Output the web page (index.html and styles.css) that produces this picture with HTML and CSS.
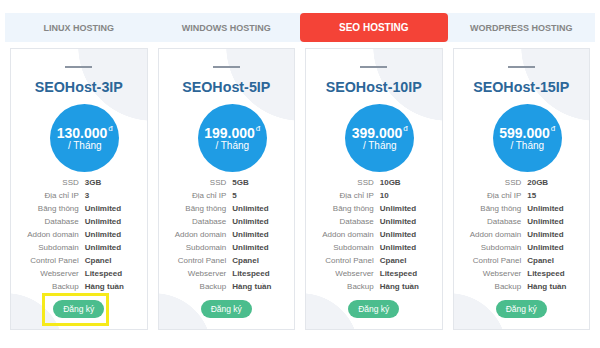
FILE: index.html
```html
<!DOCTYPE html>
<html lang="vi">
<head>
<meta charset="utf-8">
<title>SEO Hosting</title>
<link rel="stylesheet" href="styles.css">
</head>
<body>
<div class="page">
  <nav class="tabs">
    <div class="tab">LINUX HOSTING</div>
    <div class="tab">WINDOWS HOSTING</div>
    <div class="tab active">SEO HOSTING</div>
    <div class="tab">WORDPRESS HOSTING</div>
  </nav>
  <div class="plans">
    <div class="col">
      <div class="card">
        <div class="rule"></div>
        <h2 class="name">SEOHost-3IP</h2>
        <div class="price-wrap"><div class="price"><div class="amount">130.000<sup>đ</sup></div><div class="per">/ Tháng</div></div></div>
        <dl class="specs">
          <dt>SSD</dt><dd>3GB</dd>
          <dt>Địa chỉ IP</dt><dd>3</dd>
          <dt>Băng thông</dt><dd>Unlimited</dd>
          <dt>Database</dt><dd>Unlimited</dd>
          <dt>Addon domain</dt><dd>Unlimited</dd>
          <dt>Subdomain</dt><dd>Unlimited</dd>
          <dt>Control Panel</dt><dd>Cpanel</dd>
          <dt>Webserver</dt><dd>Litespeed</dd>
          <dt>Backup</dt><dd>Hàng tuần</dd>
        </dl>
        <div class="cta"><span class="btn-wrap"><a class="btn">Đăng ký</a><span class="highlight"></span></span></div>
      </div>
    </div>
    <div class="col">
      <div class="card">
        <div class="rule"></div>
        <h2 class="name">SEOHost-5IP</h2>
        <div class="price-wrap"><div class="price"><div class="amount">199.000<sup>đ</sup></div><div class="per">/ Tháng</div></div></div>
        <dl class="specs">
          <dt>SSD</dt><dd>5GB</dd>
          <dt>Địa chỉ IP</dt><dd>5</dd>
          <dt>Băng thông</dt><dd>Unlimited</dd>
          <dt>Database</dt><dd>Unlimited</dd>
          <dt>Addon domain</dt><dd>Unlimited</dd>
          <dt>Subdomain</dt><dd>Unlimited</dd>
          <dt>Control Panel</dt><dd>Cpanel</dd>
          <dt>Webserver</dt><dd>Litespeed</dd>
          <dt>Backup</dt><dd>Hàng tuần</dd>
        </dl>
        <div class="cta"><span class="btn-wrap"><a class="btn">Đăng ký</a></span></div>
      </div>
    </div>
    <div class="col">
      <div class="card">
        <div class="rule"></div>
        <h2 class="name">SEOHost-10IP</h2>
        <div class="price-wrap"><div class="price"><div class="amount">399.000<sup>đ</sup></div><div class="per">/ Tháng</div></div></div>
        <dl class="specs">
          <dt>SSD</dt><dd>10GB</dd>
          <dt>Địa chỉ IP</dt><dd>10</dd>
          <dt>Băng thông</dt><dd>Unlimited</dd>
          <dt>Database</dt><dd>Unlimited</dd>
          <dt>Addon domain</dt><dd>Unlimited</dd>
          <dt>Subdomain</dt><dd>Unlimited</dd>
          <dt>Control Panel</dt><dd>Cpanel</dd>
          <dt>Webserver</dt><dd>Litespeed</dd>
          <dt>Backup</dt><dd>Hàng tuần</dd>
        </dl>
        <div class="cta"><span class="btn-wrap"><a class="btn">Đăng ký</a></span></div>
      </div>
    </div>
    <div class="col">
      <div class="card">
        <div class="rule"></div>
        <h2 class="name">SEOHost-15IP</h2>
        <div class="price-wrap"><div class="price"><div class="amount">599.000<sup>đ</sup></div><div class="per">/ Tháng</div></div></div>
        <dl class="specs">
          <dt>SSD</dt><dd>20GB</dd>
          <dt>Địa chỉ IP</dt><dd>15</dd>
          <dt>Băng thông</dt><dd>Unlimited</dd>
          <dt>Database</dt><dd>Unlimited</dd>
          <dt>Addon domain</dt><dd>Unlimited</dd>
          <dt>Subdomain</dt><dd>Unlimited</dd>
          <dt>Control Panel</dt><dd>Cpanel</dd>
          <dt>Webserver</dt><dd>Litespeed</dd>
          <dt>Backup</dt><dd>Hàng tuần</dd>
        </dl>
        <div class="cta"><span class="btn-wrap"><a class="btn">Đăng ký</a></span></div>
      </div>
    </div>
  </div>
</div>
</body>
</html>
```

FILE: styles.css
```css
* { box-sizing: border-box; }
html, body { margin: 0; padding: 0; background: #ffffff; }
body { font-family: "Liberation Sans", Arial, sans-serif; }

.page {
  width: 600px;
  height: 348px;
  padding: 13px 5px 0 5px;
}

.tabs {
  display: grid;
  grid-template-columns: repeat(4, 1fr);
  height: 29px;
  background: #eef5fc;
}
.tab {
  display: flex;
  align-items: center;
  justify-content: center;
  font-size: 9px;
  font-weight: bold;
  color: #858585;
}
.tab.active {
  background: #f44337;
  color: #ffffff;
  font-size: 10px;
  border-radius: 4px;
}

.plans {
  display: grid;
  grid-template-columns: repeat(4, 1fr);
  margin-top: 6px;
}
.col { padding: 0 5px; }

.card {
  height: 282px;
  border: 1px solid #e3e6eb;
  background:
    radial-gradient(circle at 142px -3px, #f1f3f7 74.5px, rgba(241,243,247,0) 75px),
    radial-gradient(circle at -5px 302px, #f1f3f7 57.5px, rgba(241,243,247,0) 58px),
    #ffffff;
  padding: 17px 0 0 0;
  display: flex;
  flex-direction: column;
  align-items: stretch;
}

.rule {
  width: 27px;
  height: 2px;
  background: #8c95a2;
  margin: 0 auto;
}

.name {
  margin: 9px 0 0 0;
  font-size: 14.3px;
  line-height: 20px;
  font-weight: bold;
  color: #2c6698;
  text-align: center;
}

.price-wrap {
  display: flex;
  justify-content: center;
  padding-left: 12px;
  margin-top: 7px;
}
.price {
  width: 69px;
  height: 68px;
  border-radius: 50%;
  background: #1f9ce4;
  color: #ffffff;
  display: flex;
  flex-direction: column;
  align-items: center;
  justify-content: center;
}
.amount {
  font-size: 14px;
  font-weight: bold;
  line-height: 15px;
  white-space: nowrap;
}
.amount sup {
  font-size: 8px;
  font-weight: normal;
  vertical-align: top;
  line-height: 8px;
  position: relative;
  top: -1px;
  margin-left: 1px;
}
.per {
  font-size: 10px;
  line-height: 11px;
  margin-top: -1px;
}

.specs {
  display: grid;
  grid-template-columns: 1fr 1fr;
  margin: 3.5px 0 0 0;
  font-size: 8px;
  line-height: 13px;
}
.specs dt {
  text-align: right;
  color: #828282;
  white-space: nowrap;
}
.specs dd {
  margin: 0;
  padding-left: 6px;
  font-weight: bold;
  color: #4c4c4c;
  white-space: nowrap;
}

.cta {
  display: flex;
  justify-content: center;
  margin-top: 7.5px;
}
.btn-wrap {
  position: relative;
  display: inline-flex;
}
.btn {
  display: inline-flex;
  align-items: center;
  justify-content: center;
  width: 51px;
  height: 18px;
  border-radius: 9px;
  background: #4bbd8d;
  color: #ffffff;
  font-size: 8.5px;
  text-decoration: none;
}
.highlight {
  position: absolute;
  top: -7px;
  bottom: -8px;
  left: -11px;
  right: -5px;
  border: 3px solid #f6ea1a;
}
```
